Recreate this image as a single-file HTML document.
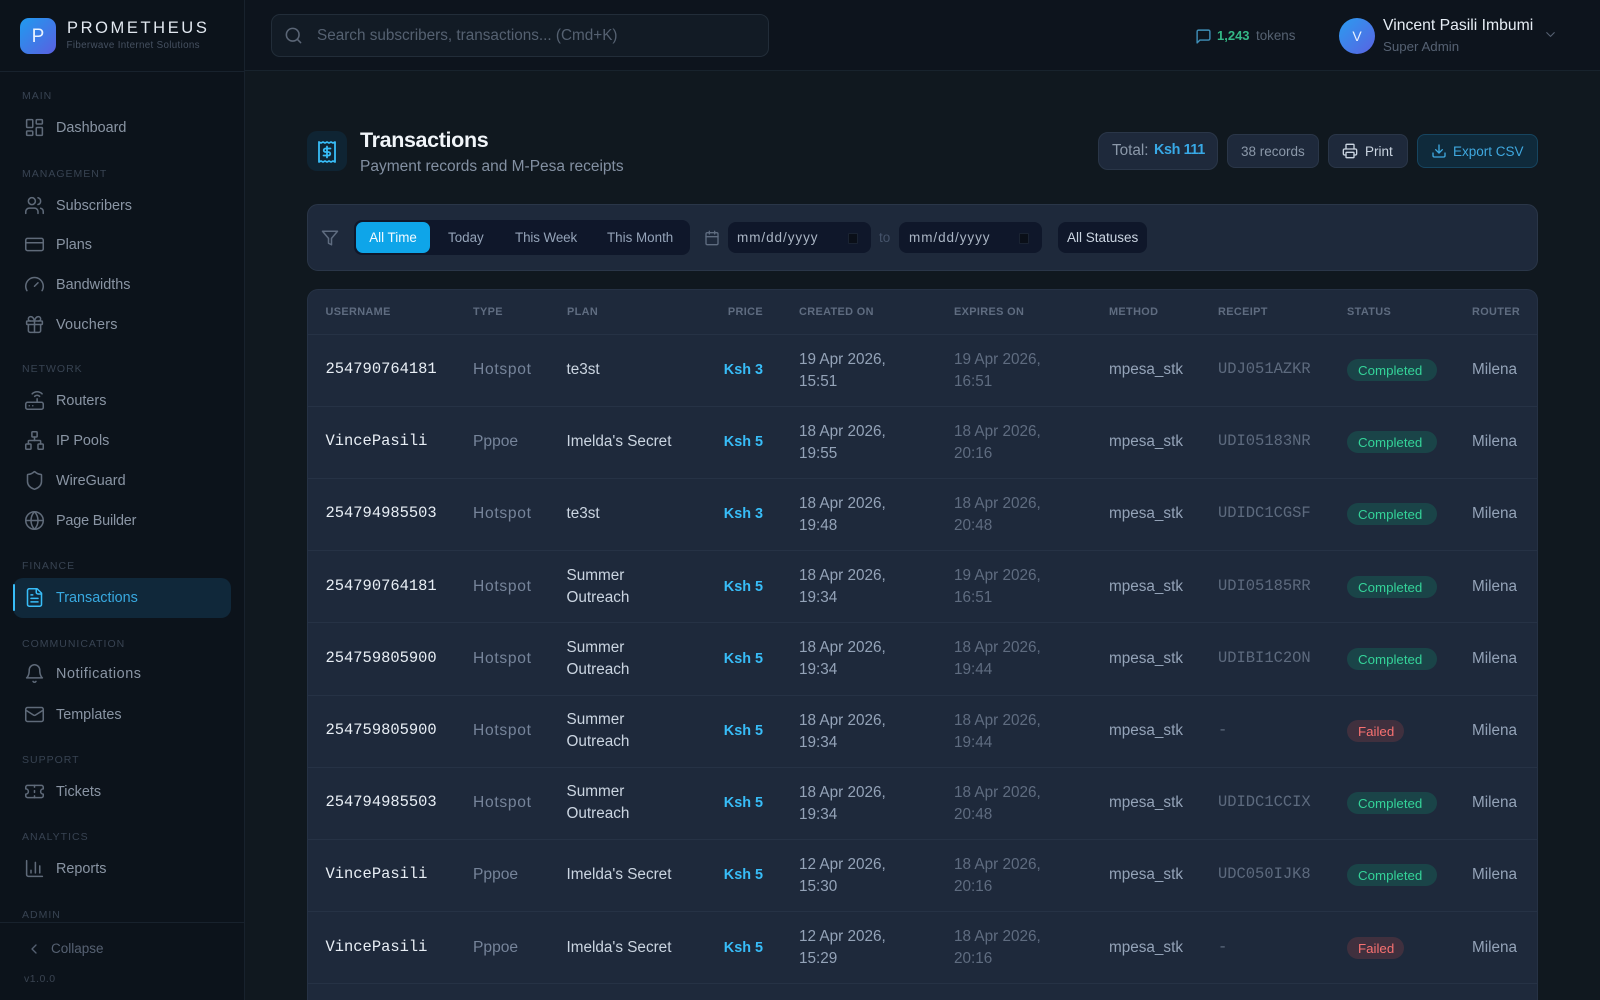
<!DOCTYPE html>
<html lang="en"><head><meta charset="utf-8"><title>Transactions</title>
<style>
*{box-sizing:border-box;margin:0;padding:0}
html{width:1600px;height:1000px;overflow:hidden;background:#10181f}
body{position:relative;width:1600px;height:1000px;overflow:hidden;background:#10181f;font-family:"Liberation Sans",sans-serif;color:#94a3b8}
.a{position:absolute;white-space:nowrap}
svg{fill:none;stroke:currentColor;stroke-width:2;stroke-linecap:round;stroke-linejoin:round;display:block}
#side{position:absolute;left:0;top:0;width:245px;height:1000px;background:#0c131b;border-right:1px solid #18222d;overflow:hidden}
.lab{position:absolute;left:22px;font-size:10.5px;letter-spacing:1px;color:#384352;line-height:14px;margin-top:.5px}
.it{position:absolute;left:56px;font-size:14.4px;line-height:20px;color:#8a95a4;margin-top:1px}
.ic{position:absolute;left:24px;width:21px;height:21px;color:#5f6a79;stroke-width:1.75;margin-top:.5px}
#top{position:absolute;left:245px;top:0;width:1355px;height:71px;background:#0d141d;border-bottom:1px solid #18232d}
.pill{position:absolute;background:#1e293b;border:1px solid #2a3648;border-radius:8px}
#filter{position:absolute;left:307px;top:204px;width:1231px;height:67px;background:#1e293b;border:1px solid #2a3648;border-radius:11px}
#tbl{position:absolute;left:307px;top:289px;width:1231px;height:711px;background:#1e293b;border:1px solid #263245;border-bottom:0;border-radius:11px 11px 0 0;overflow:hidden}
.h{position:absolute;top:0;height:44px;line-height:45px;font-size:10.9px;font-weight:bold;letter-spacing:.36px;color:#5f6c80;white-space:nowrap}
#tbl .r{position:absolute;left:0;width:100%;height:72.2px;border-top:1px solid #263245}
.c{position:absolute;top:0;height:100%;display:flex;align-items:center;white-space:nowrap;font-size:15.3px;line-height:22px}
.u{left:17.5px;top:-1px;font-family:"Liberation Mono",monospace;font-size:15.45px;color:#e8eef5}
.t{left:165px;color:#76849a;font-size:15.6px}
.hs{letter-spacing:.7px}
.p{left:258.5px;color:#cbd5e1}
.m{right:774px;color:#38bdf8;font-weight:bold;font-size:14.4px}
.cr{left:491px;top:.5px;color:#94a3b8}
.ex{left:646px;top:.5px;color:#5f6c80}
.me{left:801px;color:#94a3b8}
.re{left:910px;top:-1px;font-family:"Liberation Mono",monospace;font-size:15.45px;color:#5d6a7e}
.st{left:1039px;top:0}
.ro{left:1164px;color:#94a3b8}
.b{display:block;height:22px;line-height:23px;border-radius:11px;padding:0 11px;font-size:13.3px}
.ok{background:#1a4448;color:#34d399;width:90px}
.no{background:#40303e;color:#f87171;width:57px}
.seg{position:absolute;top:0;font-size:13.4px;line-height:35px;color:#94a3b8}
.dt{letter-spacing:.95px}
</style></head><body>

<div id="side">
<div class="a" style="left:20px;top:18px;width:36px;height:36px;border-radius:9px;background:linear-gradient(135deg,#1f9bf0,#5a5fe0);color:#e8f2ff;font-size:19px;line-height:37px;text-align:center">P</div>
<div class="a" style="left:67px;top:18px;font-size:16.5px;line-height:21px;letter-spacing:2.6px;color:#e2e8f0">PROMETHEUS</div>
<div class="a" style="left:66.5px;top:39px;font-size:9.8px;line-height:14px;letter-spacing:.33px;color:#465161">Fiberwave Internet Solutions</div>
<div class="a" style="left:0;top:71px;width:245px;height:1px;background:#18222d"></div>

<div class="lab" style="top:88px">MAIN</div>
<svg class="ic" style="top:116px" viewBox="0 0 24 24"><rect x="3" y="3" width="7" height="9" rx="1"/><rect x="14" y="3" width="7" height="5" rx="1"/><rect x="14" y="12" width="7" height="9" rx="1"/><rect x="3" y="16" width="7" height="5" rx="1"/></svg>
<div class="it" style="top:117px">Dashboard</div>

<div class="lab" style="top:166px">MANAGEMENT</div>
<svg class="ic" style="top:194px" viewBox="0 0 24 24"><path d="M16 21v-2a4 4 0 0 0-4-4H6a4 4 0 0 0-4 4v2"/><circle cx="9" cy="7" r="4"/><path d="M22 21v-2a4 4 0 0 0-3-3.87"/><path d="M16 3.13a4 4 0 0 1 0 7.75"/></svg>
<div class="it" style="top:195px">Subscribers</div>
<svg class="ic" style="top:233px" viewBox="0 0 24 24"><rect x="2" y="5" width="20" height="14" rx="2"/><path d="M2 10h20"/></svg>
<div class="it" style="top:234px">Plans</div>
<svg class="ic" style="top:273px" viewBox="0 0 24 24"><path d="m12 14 4-4"/><path d="M3.34 19a10 10 0 1 1 17.32 0"/></svg>
<div class="it" style="top:274px">Bandwidths</div>
<svg class="ic" style="top:313px" viewBox="0 0 24 24"><rect x="3" y="8" width="18" height="4" rx="1"/><path d="M12 8v13"/><path d="M19 12v7a2 2 0 0 1-2 2H7a2 2 0 0 1-2-2v-7"/><path d="M7.5 8a2.5 2.5 0 0 1 0-5A4.8 8 0 0 1 12 8a4.8 8 0 0 1 4.5-5 2.5 2.5 0 0 1 0 5"/></svg>
<div class="it" style="top:314px;letter-spacing:.2px">Vouchers</div>

<div class="lab" style="top:361px">NETWORK</div>
<svg class="ic" style="top:389px" viewBox="0 0 24 24"><rect x="2" y="14" width="20" height="8" rx="2"/><path d="M6.01 18H6"/><path d="M10.01 18H10"/><path d="M15 10v4"/><path d="M17.84 7.17a4 4 0 0 0-5.66 0"/><path d="M20.66 4.34a8 8 0 0 0-11.31 0"/></svg>
<div class="it" style="top:390px">Routers</div>
<svg class="ic" style="top:429px" viewBox="0 0 24 24"><rect x="16" y="16" width="6" height="6" rx="1"/><rect x="2" y="16" width="6" height="6" rx="1"/><rect x="9" y="2" width="6" height="6" rx="1"/><path d="M5 16v-3a1 1 0 0 1 1-1h12a1 1 0 0 1 1 1v3"/><path d="M12 12V8"/></svg>
<div class="it" style="top:430px">IP Pools</div>
<svg class="ic" style="top:469px" viewBox="0 0 24 24"><path d="M20 13c0 5-3.5 7.5-7.66 8.95a1 1 0 0 1-.67-.01C7.5 20.5 4 18 4 13V6a1 1 0 0 1 1-1c2 0 4.5-1.2 6.24-2.72a1.17 1.17 0 0 1 1.52 0C14.51 3.81 17 5 19 5a1 1 0 0 1 1 1z"/></svg>
<div class="it" style="top:470px">WireGuard</div>
<svg class="ic" style="top:509px" viewBox="0 0 24 24"><circle cx="12" cy="12" r="10"/><path d="M12 2a14.5 14.5 0 0 0 0 20 14.5 14.5 0 0 0 0-20"/><path d="M2 12h20"/></svg>
<div class="it" style="top:510px;letter-spacing:-.18px">Page Builder</div>

<div class="lab" style="top:558px">FINANCE</div>
<div class="a" style="left:13px;top:578px;width:218px;height:40px;border-radius:10px;background:#10283a"></div>
<div class="a" style="left:13px;top:584px;width:2px;height:27px;background:#38bdf8;border-radius:2px"></div>
<svg class="ic" style="top:586px;color:#38bdf8" viewBox="0 0 24 24"><path d="M15 2H6a2 2 0 0 0-2 2v16a2 2 0 0 0 2 2h12a2 2 0 0 0 2-2V7Z"/><path d="M14 2v4a2 2 0 0 0 2 2h4"/><path d="M10 9H8"/><path d="M16 13H8"/><path d="M16 17H8"/></svg>
<div class="it" style="top:587px;color:#38a9e0">Transactions</div>

<div class="lab" style="top:636px">COMMUNICATION</div>
<svg class="ic" style="top:662px" viewBox="0 0 24 24"><path d="M6 8a6 6 0 0 1 12 0c0 7 3 9 3 9H3s3-2 3-9"/><path d="M10.3 21a1.94 1.94 0 0 0 3.4 0"/></svg>
<div class="it" style="top:663px;letter-spacing:.55px">Notifications</div>
<svg class="ic" style="top:703px" viewBox="0 0 24 24"><rect x="2" y="4" width="20" height="16" rx="2"/><path d="m22 7-8.97 5.7a1.94 1.94 0 0 1-2.06 0L2 7"/></svg>
<div class="it" style="top:704px">Templates</div>

<div class="lab" style="top:752px">SUPPORT</div>
<svg class="ic" style="top:780px" viewBox="0 0 24 24"><path d="M2 9a3 3 0 0 1 0 6v2a2 2 0 0 0 2 2h16a2 2 0 0 0 2-2v-2a3 3 0 0 1 0-6V7a2 2 0 0 0-2-2H4a2 2 0 0 0-2 2Z"/><path d="M12 5v2"/><path d="M12 17v2"/><path d="M12 11v2"/></svg>
<div class="it" style="top:781px">Tickets</div>

<div class="lab" style="top:829px">ANALYTICS</div>
<svg class="ic" style="top:857px" viewBox="0 0 24 24"><path d="M3 3v16a2 2 0 0 0 2 2h16"/><path d="M18 17V9"/><path d="M13 17V5"/><path d="M8 17v-3"/></svg>
<div class="it" style="top:858px">Reports</div>

<div class="lab" style="top:907px">ADMIN</div>
<div class="a" style="left:0;top:922px;width:244px;height:78px;background:#0c131b;border-top:1px solid #18222d"></div>
<svg class="a" style="left:26px;top:941px;color:#566172" width="16" height="16" viewBox="0 0 24 24"><path d="m15 18-6-6 6-6"/></svg>
<div class="a" style="left:51px;top:940px;font-size:13.5px;line-height:18px;color:#566172">Collapse</div>
<div class="a" style="left:24px;top:972px;font-size:10.5px;line-height:14px;letter-spacing:.5px;color:#3a4452">v1.0.0</div>
</div>

<div id="top"></div>
<div class="a" style="left:271px;top:14px;width:498px;height:43px;background:#121b25;border:1px solid #222d39;border-radius:9px"></div>
<svg class="a" style="left:284px;top:26px;color:#5b6676" width="19" height="19" viewBox="0 0 24 24"><circle cx="11" cy="11" r="8"/><path d="m21 21-4.3-4.3"/></svg>
<div class="a" style="left:317px;top:26px;font-size:15.3px;line-height:20px;color:#556171">Search subscribers, transactions... (Cmd+K)</div>

<svg class="a" style="left:1194.5px;top:27.5px;color:#3f8fb8" width="17" height="17" viewBox="0 0 24 24"><path d="M21 15a2 2 0 0 1-2 2H7l-4 4V5a2 2 0 0 1 2-2h14a2 2 0 0 1 2 2z"/></svg>
<div class="a" style="left:1217px;top:27px;font-size:13px;line-height:17px;font-weight:bold;color:#34b886">1,243</div>
<div class="a" style="left:1256px;top:27px;font-size:13.4px;line-height:17px;color:#566272">tokens</div>
<div class="a" style="left:1339px;top:18px;width:36px;height:36px;border-radius:50%;background:linear-gradient(135deg,#2a9cf0,#5a62e2);color:#e8f2ff;font-size:14px;line-height:36px;text-align:center">V</div>
<div class="a" style="left:1383px;top:16px;font-size:15.75px;line-height:20px;color:#e6edf5">Vincent Pasili Imbumi</div>
<div class="a" style="left:1383px;top:38px;font-size:13.3px;line-height:18px;color:#556172">Super Admin</div>
<svg class="a" style="left:1543px;top:27px;color:#566172;stroke-width:1.7" width="15" height="15" viewBox="0 0 24 24"><path d="m6 9 6 6 6-6"/></svg>

<div class="a" style="left:307px;top:131px;width:40px;height:40px;border-radius:10px;background:#0f2433"></div>
<svg class="a" style="left:315px;top:140px;color:#38bdf8;stroke-width:1.8" width="24" height="24" viewBox="0 0 24 24"><path d="M4 2v20l2-1 2 1 2-1 2 1 2-1 2 1 2-1 2 1V2l-2 1-2-1-2 1-2-1-2 1-2-1-2 1Z"/><path d="M15.5 8.5h-5a1.7 1.7 0 1 0 0 3.5h3a1.7 1.7 0 1 1 0 3.5h-5"/><path d="M12 17.5v-11"/></svg>
<div class="a" style="left:360px;top:126px;font-size:21.5px;line-height:28px;font-weight:bold;letter-spacing:-.36px;color:#f1f5f9">Transactions</div>
<div class="a" style="left:360px;top:157px;font-size:15.5px;line-height:20px;color:#8390a2">Payment records and M-Pesa receipts</div>

<div class="pill" style="left:1098px;top:132px;width:120px;height:38px;border-radius:10px"></div>
<div class="a" style="left:1112px;top:141px;font-size:15.3px;line-height:19px;color:#8b98a9">Total:</div>
<div class="a" style="left:1154px;top:141px;font-size:14.4px;line-height:19px;font-weight:bold;letter-spacing:-.4px;color:#38a9e6">Ksh 111</div>
<div class="pill" style="left:1227px;top:134px;width:92px;height:34px"></div>
<div class="a" style="left:1241px;top:143px;font-size:13.5px;line-height:17px;color:#8b98a9">38 records</div>
<div class="pill" style="left:1328px;top:134px;width:80px;height:34px"></div>
<svg class="a" style="left:1342px;top:143px;color:#cbd5e1" width="16" height="16" viewBox="0 0 24 24"><path d="M6 18H4a2 2 0 0 1-2-2v-5a2 2 0 0 1 2-2h16a2 2 0 0 1 2 2v5a2 2 0 0 1-2 2h-2"/><path d="M6 9V3a1 1 0 0 1 1-1h10a1 1 0 0 1 1 1v6"/><rect x="6" y="14" width="12" height="8" rx="1"/></svg>
<div class="a" style="left:1365px;top:143px;font-size:13.5px;line-height:17px;color:#cbd5e1">Print</div>
<div class="a" style="left:1417px;top:134px;width:121px;height:34px;background:#0f2a3b;border:1px solid #164560;border-radius:8px"></div>
<svg class="a" style="left:1431px;top:143px;color:#3fa8df" width="16" height="16" viewBox="0 0 24 24"><path d="M21 15v4a2 2 0 0 1-2 2H5a2 2 0 0 1-2-2v-4"/><path d="m7 10 5 5 5-5"/><path d="M12 15V3"/></svg>
<div class="a" style="left:1453px;top:143px;font-size:13.5px;line-height:17px;color:#3fa8df">Export CSV</div>

<div id="filter"></div>
<svg class="a" style="left:321px;top:229px;color:#5f6c80" width="18" height="18" viewBox="0 0 24 24"><path d="M22 3H2l8 9.46V19l4 2v-8.54L22 3z"/></svg>
<div class="a" style="left:354px;top:220px;width:336px;height:35px;background:#0f172a;border-radius:8px">
<div class="a" style="left:2px;top:2px;width:74px;height:31px;background:#0ea5e9;border-radius:7px;color:#f2faff;font-size:13.4px;line-height:31px;text-align:center">All Time</div>
<div class="seg" style="left:94px">Today</div>
<div class="seg" style="left:161px;letter-spacing:-.1px">This Week</div>
<div class="seg" style="left:253px">This Month</div>
</div>
<svg class="a" style="left:704px;top:230px;color:#5f6c80" width="16" height="16" viewBox="0 0 24 24"><path d="M8 2v4"/><path d="M16 2v4"/><rect x="3" y="4" width="18" height="18" rx="2"/><path d="M3 10h18"/></svg>
<div class="a dt" style="left:728px;top:222px;width:143px;height:31px;background:#0f172a;border-radius:8px;color:#aab5c4;font-size:13.5px;line-height:31px;padding-left:9px">mm/dd/yyyy</div>
<div class="a" style="left:848px;top:233px;width:10px;height:11px;background:#0a0f18;border-radius:1px;border:1px solid #1a2332"></div>
<div class="a" style="left:879px;top:229px;font-size:13.5px;line-height:18px;color:#45536a">to</div>
<div class="a dt" style="left:899px;top:222px;width:143px;height:31px;background:#0f172a;border-radius:8px;color:#aab5c4;font-size:13.5px;line-height:31px;padding-left:10px">mm/dd/yyyy</div>
<div class="a" style="left:1019px;top:233px;width:10px;height:11px;background:#0a0f18;border-radius:1px;border:1px solid #1a2332"></div>
<div class="a" style="left:1058px;top:222px;width:89px;height:31px;background:#0f172a;border-radius:8px;color:#cbd5e1;font-size:13.5px;line-height:31px;padding-left:9px">All Statuses</div>

<div id="tbl">
<div class="h" style="left:17.5px">USERNAME</div>
<div class="h" style="left:165px">TYPE</div>
<div class="h" style="left:259px">PLAN</div>
<div class="h" style="right:774px">PRICE</div>
<div class="h" style="left:491px">CREATED ON</div>
<div class="h" style="left:646px">EXPIRES ON</div>
<div class="h" style="left:801px">METHOD</div>
<div class="h" style="left:910px">RECEIPT</div>
<div class="h" style="left:1039px">STATUS</div>
<div class="h" style="left:1164px">ROUTER</div>

<div class="r" style="top:43.5px"><div class="c u">254790764181</div><div class="c t hs">Hotspot</div><div class="c p">te3st</div><div class="c m">Ksh 3</div><div class="c cr">19 Apr 2026,<br>15:51</div><div class="c ex">19 Apr 2026,<br>16:51</div><div class="c me">mpesa_stk</div><div class="c re">UDJ051AZKR</div><div class="c st"><span class="b ok">Completed</span></div><div class="c ro">Milena</div></div>

<div class="r" style="top:115.7px"><div class="c u">VincePasili</div><div class="c t">Pppoe</div><div class="c p">Imelda's Secret</div><div class="c m">Ksh 5</div><div class="c cr">18 Apr 2026,<br>19:55</div><div class="c ex">18 Apr 2026,<br>20:16</div><div class="c me">mpesa_stk</div><div class="c re">UDI05183NR</div><div class="c st"><span class="b ok">Completed</span></div><div class="c ro">Milena</div></div>

<div class="r" style="top:187.9px"><div class="c u">254794985503</div><div class="c t hs">Hotspot</div><div class="c p">te3st</div><div class="c m">Ksh 3</div><div class="c cr">18 Apr 2026,<br>19:48</div><div class="c ex">18 Apr 2026,<br>20:48</div><div class="c me">mpesa_stk</div><div class="c re">UDIDC1CGSF</div><div class="c st"><span class="b ok">Completed</span></div><div class="c ro">Milena</div></div>

<div class="r" style="top:260.1px"><div class="c u">254790764181</div><div class="c t hs">Hotspot</div><div class="c p">Summer<br>Outreach</div><div class="c m">Ksh 5</div><div class="c cr">18 Apr 2026,<br>19:34</div><div class="c ex">19 Apr 2026,<br>16:51</div><div class="c me">mpesa_stk</div><div class="c re">UDI05185RR</div><div class="c st"><span class="b ok">Completed</span></div><div class="c ro">Milena</div></div>

<div class="r" style="top:332.3px"><div class="c u">254759805900</div><div class="c t hs">Hotspot</div><div class="c p">Summer<br>Outreach</div><div class="c m">Ksh 5</div><div class="c cr">18 Apr 2026,<br>19:34</div><div class="c ex">18 Apr 2026,<br>19:44</div><div class="c me">mpesa_stk</div><div class="c re">UDIBI1C2ON</div><div class="c st"><span class="b ok">Completed</span></div><div class="c ro">Milena</div></div>

<div class="r" style="top:404.5px"><div class="c u">254759805900</div><div class="c t hs">Hotspot</div><div class="c p">Summer<br>Outreach</div><div class="c m">Ksh 5</div><div class="c cr">18 Apr 2026,<br>19:34</div><div class="c ex">18 Apr 2026,<br>19:44</div><div class="c me">mpesa_stk</div><div class="c re">-</div><div class="c st"><span class="b no">Failed</span></div><div class="c ro">Milena</div></div>

<div class="r" style="top:476.7px"><div class="c u">254794985503</div><div class="c t hs">Hotspot</div><div class="c p">Summer<br>Outreach</div><div class="c m">Ksh 5</div><div class="c cr">18 Apr 2026,<br>19:34</div><div class="c ex">18 Apr 2026,<br>20:48</div><div class="c me">mpesa_stk</div><div class="c re">UDIDC1CCIX</div><div class="c st"><span class="b ok">Completed</span></div><div class="c ro">Milena</div></div>

<div class="r" style="top:548.9px"><div class="c u">VincePasili</div><div class="c t">Pppoe</div><div class="c p">Imelda's Secret</div><div class="c m">Ksh 5</div><div class="c cr">12 Apr 2026,<br>15:30</div><div class="c ex">18 Apr 2026,<br>20:16</div><div class="c me">mpesa_stk</div><div class="c re">UDC050IJK8</div><div class="c st"><span class="b ok">Completed</span></div><div class="c ro">Milena</div></div>

<div class="r" style="top:621.1px"><div class="c u">VincePasili</div><div class="c t">Pppoe</div><div class="c p">Imelda's Secret</div><div class="c m">Ksh 5</div><div class="c cr">12 Apr 2026,<br>15:29</div><div class="c ex">18 Apr 2026,<br>20:16</div><div class="c me">mpesa_stk</div><div class="c re">-</div><div class="c st"><span class="b no">Failed</span></div><div class="c ro">Milena</div></div>

<div class="r" style="top:693.3px;height:17px"></div>
</div>
</body></html>
